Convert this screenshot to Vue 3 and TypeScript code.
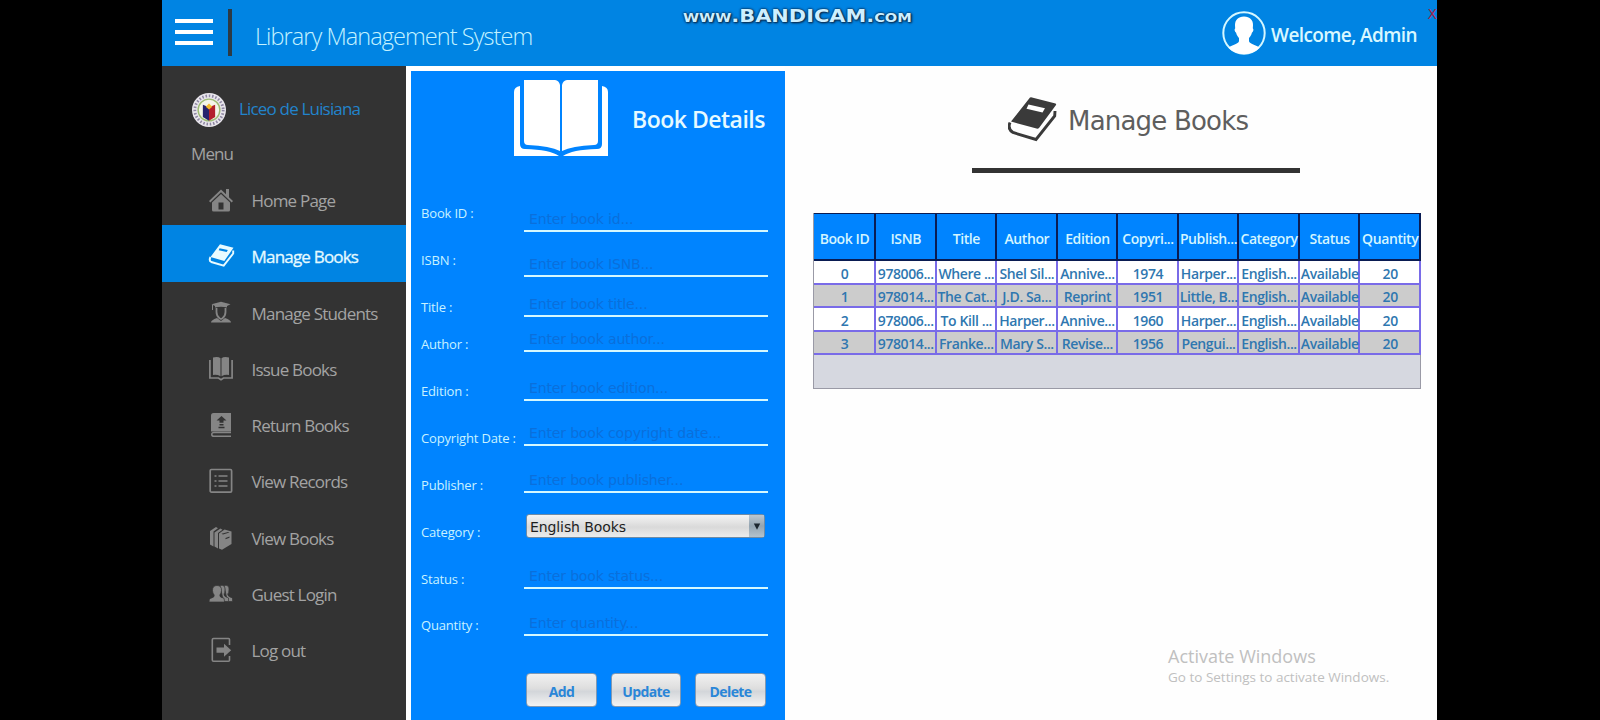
<script setup lang="ts">
import { ref } from 'vue'

interface MenuItem {
  label: string
  icon: string
}
interface Field {
  label: string
  placeholder?: string
}

const menu: MenuItem[] = [
  { label: 'Home Page', icon: 'home' },
  { label: 'Manage Books', icon: 'book' },
  { label: 'Manage Students', icon: 'student' },
  { label: 'Issue Books', icon: 'open' },
  { label: 'Return Books', icon: 'return' },
  { label: 'View Records', icon: 'list' },
  { label: 'View Books', icon: 'books' },
  { label: 'Guest Login', icon: 'group' },
  { label: 'Log out', icon: 'exit' },
]
const active = ref('Manage Books')

const fields: Field[] = [
  { label: 'Book ID :', placeholder: 'Enter book id...' },
  { label: 'ISBN :', placeholder: 'Enter book ISNB...' },
  { label: 'Title :', placeholder: 'Enter book title...' },
  { label: 'Author :', placeholder: 'Enter book author...' },
  { label: 'Edition :', placeholder: 'Enter book edition...' },
  { label: 'Copyright Date :', placeholder: 'Enter book copyright date...' },
  { label: 'Publisher :', placeholder: 'Enter book publisher...' },
  { label: 'Category :' },
  { label: 'Status :', placeholder: 'Enter book status...' },
  { label: 'Quantity :', placeholder: 'Enter quantity...' },
]

const columns: string[] = ['Book ID', 'ISNB', 'Title', 'Author', 'Edition', 'Copyri...', 'Publish...', 'Category', 'Status', 'Quantity']
const rows: string[][] = [
  ['0', '978006...', 'Where ...', 'Shel Sil...', 'Annive...', '1974', 'Harper...', 'English...', 'Available', '20'],
  ['1', '978014...', 'The Cat...', 'J.D. Sa...', 'Reprint', '1951', 'Little, B...', 'English...', 'Available', '20'],
  ['2', '978006...', 'To Kill ...', 'Harper...', 'Annive...', '1960', 'Harper...', 'English...', 'Available', '20'],
  ['3', '978014...', 'Franke...', 'Mary S...', 'Revise...', '1956', 'Pengui...', 'English...', 'Available', '20'],
]
</script>

<template>
  <div class="stage">
    <div class="app">
      <header class="top">
        <div class="burger"><i></i><i></i><i></i></div>
        <div class="divider"></div>
        <div class="title">Library Management System</div>
        <div class="user">
          <svg class="avatar" viewBox="0 0 44 44">
            <circle cx="22" cy="22" r="20.7" fill="none" stroke="#d5f7ff" stroke-width="2" />
            <path d="M22 5.500c6 0 9 3.600 9 8.500 0 1.500-.2 2.500-.2 3.300 1.200.7.500 3.700-.9 4.500-.6 2.400-1.700 4-2.900 5.200v3c0 2.500 6.500 4 10.500 6.500C34.500 40.500 28.500 43 22 43S9.500 40.500 6.500 36.500C10.500 34 17 32.500 17 30v-3c-1.200-1.200-2.300-2.800-2.900-5.200-1.400-.8-2.100-3.800-.9-4.500 0-.8-.2-1.800-.2-3.300 0-4.900 3-8.500 9-8.500z" fill="#fff" />
          </svg>
          <span class="welcome">Welcome, Admin</span>
        </div>
        <div class="close">X</div>
        <div class="wm"><small>www</small>.BANDICAM.<small>com</small></div>
      </header>
      <div class="body">
        <nav class="side">
          <div class="brand">
            <svg viewBox="0 0 36 36">
              <circle cx="18" cy="18" r="18" fill="#e9e6ec" />
              <circle cx="18" cy="18" r="15" fill="none" stroke="#8f88a3" stroke-width="3" stroke-dasharray="1.600 1.900" />
              <circle cx="18" cy="18" r="11.500" fill="#f4f5ea" stroke="#9dbb74" stroke-width="1.500" />
              <path d="M11.500 12.500l6.500 2.500v14.500l-6.500-4z" fill="#27236e" />
              <path d="M24.500 12.500L18 15v14.500l6.500-4z" fill="#b3202c" />
              <path d="M14.500 14.500l3.500-3.500 3.500 3.500-3.500 3z" fill="#f2b92c" />
            </svg>
            <b>Liceo de Luisiana</b>
          </div>
          <div class="menu-title">Menu</div>
          <a v-for="m in menu" :key="m.label" class="item" :class="{ on: m.label === active }" @click="active = m.label">
            <svg viewBox="0 0 24 24" fill="currentColor">
              <g v-if="m.icon === 'home'">
                <path d="M0 13L12 1.500l5 4.800V1h3v8.200L24 13l-1.300 1.400L12 4.200 1.300 14.400z" />
                <path fill-rule="evenodd" d="M12 6l9 8.600V22q0 1.500-1.500 1.500h-15Q3 23.500 3 22v-7.400zM9.500 14.500v7h5v-7z" />
              </g>
              <g v-else-if="m.icon === 'book'">
                <path fill-rule="evenodd" d="M11 .3L24.500 3.700 15.300 17 1.500 13zM10.600 4.200l-.9 2 8 1.900 1.100-2z" />
                <path d="M24.200 6.500v3L14.700 21.600 2.300 18Q-.3 16.800 1.400 13" fill="none" stroke="currentColor" stroke-width="1.900" />
              </g>
              <g v-else-if="m.icon === 'student'">
                <path d="M2.500 3.200L12 .8l9.500 2.400L18 5v1.500q-6-1.500-12 0V5z" />
                <path d="M7.500 7v4q0 4 3 6.300l1.500.7 1.500-.7q3-2.300 3-6.300V7" fill="none" stroke="currentColor" stroke-width="1.800" />
                <path d="M2 21.500q0-2.500 6-4.500l4 3 4-3q6 2 6 4.500z" />
                <path d="M3.500 4v5" stroke="currentColor" />
              </g>
              <g v-else-if="m.icon === 'open'">
                <path d="M4 .5q5-1.200 7.500.7v18Q8 17.300 4 18zM20 .5q-5-1.200-7.500.7v18q3.500-1.900 7.500-1.200z" />
                <path d="M.9 3v18h8.600L12 22.800l2.500-1.800h8.600V3" fill="none" stroke="currentColor" stroke-width="1.700" />
              </g>
              <g v-else-if="m.icon === 'return'">
                <path fill-rule="evenodd" d="M4.500 0H22v18.500H2V2.500Q2 0 4.500 0zM12.500 3L7.500 7.500h3v2.300h4V7.500h3zM10.500 11v1.500h4V11zM9.500 13.700v1.500h6v-1.500z" />
                <path d="M22 19.500H5q-2.200 0-2.200 1.900T5 23.300h17" fill="none" stroke="currentColor" stroke-width="1.500" />
              </g>
              <g v-else-if="m.icon === 'list'">
                <rect x="1.200" y=".5" width="21.400" height="22.600" rx="1.200" fill="none" stroke="currentColor" stroke-width="1.700" />
                <path d="M5.500 7h2M9.500 7h9M5.500 12h2M9.500 12h9M5.500 17h2M9.500 17h9" stroke="currentColor" stroke-width="1.600" />
              </g>
              <g v-else-if="m.icon === 'books'">
                <path d="M1 5l6-4 2 1.200L4.500 5.500v15L1 18.500zM5.500 6.500l6-4 2 1.200L9 7v15.500l-3.500-2z" />
                <path fill-rule="evenodd" d="M10 7.500l5.500-4 7 2v12.500L13 23.700 10 22.500zM12.500 7.700l1.500.8 6.500-2-1.500-.5zM16.500 12v1.300l4-1.500v-1.300z" />
              </g>
              <g v-else-if="m.icon === 'group'" stroke="#333" stroke-width=".7">
                <path d="M15 3.500q5-1 5 3.500t-1.300 5q-.3 2.500 4.800 4v3.500h-5z" />
                <path d="M11 3.500q5-1 5 3.500t-1 5q-.5 2.500 4.500 4v3.500h-5z" />
                <path d="M8 3.500q4.700 0 4.500 5-.2 3-1.700 4.500-.5 2.500 4.200 3.200l.6 3.800H0q0-3 1.300-3.500 4.700-1.200 3.900-3.500Q3.600 11.500 3.500 8.500 3.400 3.500 8 3.500z" />
              </g>
              <g v-else>
                <path d="M20.500 7V1.500q0-1-1-1h-15q-1.200 0-1.200 1.200v20.300q0 1.200 1.200 1.200h15q1 0 1-1V18" fill="none" stroke="currentColor" stroke-width="1.600" />
                <path d="M7.500 9.500H15V5.800l7.200 6.500L15 18.700v-3.900H7.500z" />
              </g>
            </svg>
            <span>{{ m.label }}</span>
          </a>
        </nav>

        <section class="panel">
          <div class="panel-head">
            <svg viewBox="0 0 94 76" fill="#fff">
              <path d="M10 0h31q4 .5 5 5v66Q36 66 14 65q-4 0-4-4zM84 0H53q-4 .5-5 5v66q10-5 32-6 4 0 4-4z" />
              <path d="M6 6v58q0 5 5 5 25 .5 34 7H0V12q0-5 6-6zM88 6v58q0 5-5 5-25 .5-34 7h45V12q0-5-6-6z" />
            </svg>
            <h2>Book Details</h2>
          </div>
          <div class="form">
            <div class="labels"><span v-for="f in fields" :key="f.label">{{ f.label }}</span></div>
            <div class="inputs">
              <template v-for="f in fields" :key="f.label">
                <div v-if="f.placeholder" class="input">{{ f.placeholder }}</div>
                <div v-else class="combo">
                  <span>English Books</span>
                  <i><svg viewBox="0 0 8 8"><path d="M.8 1h6.400L4 7.200z" fill="#1c2730" /></svg></i>
                </div>
              </template>
            </div>
          </div>
          <div class="buttons">
            <button class="btn">Add</button>
            <button class="btn mid">Update</button>
            <button class="btn">Delete</button>
          </div>
        </section>

        <main class="main">
          <h1>
            <svg viewBox="0 0 50 46">
              <path fill-rule="evenodd" d="M22 1.500Q23 1 24 1.400L47.500 7.500Q48.500 8 48 9L31 32q-1 1-2.500.6L3 25.500zM20.500 8.500l-2 4.300 16 3.700 2.500-4.300z" fill="#3a3a3a" />
              <path d="M47 15l-.3 5L28 43.500 5 36.500Q-.8 33 2 26.500" fill="none" stroke="#3a3a3a" stroke-width="2.900" />
            </svg>
            <span>Manage Books</span>
          </h1>
          <div class="rule"></div>
          <div class="tablebox">
            <table>
              <thead><tr><th v-for="c in columns" :key="c">{{ c }}</th></tr></thead>
              <tbody>
                <tr v-for="(r, i) in rows" :key="i"><td v-for="(c, j) in r" :key="j">{{ c }}</td></tr>
              </tbody>
            </table>
          </div>
          <div class="act"><b>Activate Windows</b><span>Go to Settings to activate Windows.</span></div>
        </main>
      </div>
    </div>
  </div>
</template>

<style>
body { background: #000; overflow: hidden; }
</style>

<style scoped>
.stage { width: 1600px; height: 720px; background: #000; display: flex; overflow: hidden; font-family: 'Open Sans', 'Noto Sans', sans-serif; }
.app { margin-left: 162px; width: 1275px; height: 720px; display: flex; flex-direction: column; background: #fff; }
.top { position: relative; height: 66px; flex: none; background: #0084e3; display: flex; }
.burger { margin: 19px 0 0 13px; width: 38px; display: flex; flex-direction: column; gap: 7px; }
.burger i { height: 4px; background: #fff; }
.divider { margin: 9px 0 0 15px; width: 4px; height: 47px; background: #2c3a45; }
.title { margin: 20px 0 0 23px; font-size: 23.500px; line-height: 32px; font-weight: 300; letter-spacing: -0.94px; color: #c4f2ff; white-space: nowrap; }
.user { margin: 11px 20px 0 auto; display: flex; }
.avatar { width: 44px; height: 44px; }
.welcome { margin-left: 5px; font-size: 19px; line-height: 48px; font-weight: 600; letter-spacing: -0.6px; color: #d9f8ff; white-space: nowrap; }
.close { position: absolute; right: 0; top: 4px; font: 14px/20px 'DejaVu Sans', sans-serif; color: #a3244f; }
.wm { position: absolute; left: 521px; top: 5px; font: bold 18px/21px 'DejaVu Sans', sans-serif; color: #cdefff; white-space: nowrap; text-shadow: 0 0 2px #0a2c50, 0 0 2px #0a2c50, 1px 1px 2px #0a2c50; transform: scaleX(1.160); transform-origin: 0 0; }
.wm small { font-size: 12.600px; text-transform: uppercase; }
.body { flex: 1; display: flex; min-height: 0; }
.side { width: 244px; background: #333; flex: none; }
.brand { display: flex; align-items: center; height: 36px; padding: 26px 0 0 30px; }
.brand svg { width: 34px; height: 34px; }
.brand b { margin: -3px 0 0 13px; font-size: 17px; font-weight: 400; letter-spacing: -0.82px; color: #2284cc; white-space: nowrap; }
.menu-title { padding: 12px 0 0 29px; height: 29px; line-height: 27px; font-size: 17px; letter-spacing: -0.9px; color: #a2a2a2; }
.item { height: 56.250px; box-sizing: border-box; display: flex; align-items: center; padding: 6px 0 0 47px; color: #858585; }
.item svg { width: 24px; height: 24px; overflow: visible; }
.item span { margin: 1px 0 0 18.500px; font-size: 17px; letter-spacing: -0.8px; color: #a3a3a3; white-space: nowrap; }
.item.on { background: #0084e3; color: #e9fbff; }
.item.on span { color: #e4faff; -webkit-text-stroke: 0.3px #e4faff; }
.panel { margin: 5px 0 0 5px; width: 374px; background: #0084ff; flex: none; }
.panel-head { display: flex; height: 129px; }
.panel-head svg { margin: 9px 0 0 103px; width: 94px; height: 76px; }
.panel-head h2 { margin: 32px 0 0 24px; font-size: 23px; line-height: 32px; font-weight: 600; letter-spacing: -0.5px; color: #e6faff; white-space: nowrap; }
.form { display: flex; height: 436px; }
.labels { width: 103px; padding-left: 10px; display: grid; grid-template-rows: 23px 47px 47px 37px 47px 47px 47px 47px 47px 46px; align-items: end; }
.labels span { font-size: 13px; line-height: 20px; letter-spacing: -0.17px; color: #c9f2ff; white-space: nowrap; }
.inputs { width: 244px; display: grid; grid-template-rows: 32px 45px 40px 35px 49px 45px 47px 45px 51px 47px; align-items: end; }
.input { border-bottom: 2px solid #d4f8ff; padding-left: 5px; font: 14px/22px 'DejaVu Sans', sans-serif; letter-spacing: -0.15px; color: #0a6fdb; white-space: nowrap; }
.combo { margin: 0 3px 0 2px; height: 24px; box-sizing: border-box; border: 1px solid #6f8ba5; border-radius: 3px; display: flex; background: linear-gradient(#f4f4f4, #d9d9d9 55%, #ececec); }
.combo span { flex: 1; padding-left: 3px; font: 14px/24px 'DejaVu Sans', sans-serif; letter-spacing: -0.1px; color: #1e1e1e; white-space: nowrap; }
.combo i { width: 15px; background: linear-gradient(#bcc7d0, #93a4b1 50%, #b4c2cc); display: flex; align-items: center; justify-content: center; }
.combo svg { width: 8px; height: 9px; }
.buttons { display: flex; gap: 14px; margin: 37px 0 0 115px; }
.btn { width: 71px; height: 34px; padding: 3px 0 0; border: 1px solid #8199b3; border-radius: 4px; background: linear-gradient(#f1f1f1, #dedede 45%, #d3d6da 55%, #f3f3f3); font: bold 14px/29px 'Open Sans', sans-serif; letter-spacing: -0.6px; color: #2a86d8; }
.btn.mid { width: 70px; }
.main { flex: 1; display: flex; flex-direction: column; min-width: 0; background: #fefefe; }
.main h1 { margin: 30px 0 0 223px; height: 48px; display: flex; font: 26px/50px 'DejaVu Sans', sans-serif; letter-spacing: -0.8px; color: #5e5e5e; white-space: nowrap; }
.main h1 svg { width: 50px; height: 46px; }
.main h1 span { margin-left: 10px; }
.rule { width: 328px; height: 5px; margin: 24px 0 0 187px; background: #333; flex: none; }
.tablebox { margin: 40px 0 0 28px; width: 608px; height: 176px; box-sizing: border-box; border: 1px solid #9a9aa6; background: #d6d8e0; flex: none; }
table { width: 607px; margin: -1px 0 0; table-layout: fixed; border-collapse: separate; border-spacing: 0; }
th, td { box-sizing: border-box; padding: 0; text-align: center; white-space: nowrap; font-size: 14px; line-height: 20px; font-weight: 600; letter-spacing: -0.4px; }
th { height: 48px; padding: 4px 0 0 1px; background: #0084ff; color: #d3f5ff; border: solid #0a1c52; border-width: 1px 2px 2px 0; }
th:first-child { width: 62px; }
td { height: 23px; padding: 2px 0 0 1px; line-height: 19px; background: #fff; color: #2f77b0; border: solid #796be8; border-width: 0 2px 2px 0; }
tbody tr:nth-child(odd) td { height: 24px; padding-top: 2px; }
tbody tr:nth-child(even) td { background: #ccc; }
.act { margin: auto 0 34px 383px; display: flex; flex-direction: column; color: #c0c0c0; white-space: nowrap; }
.act b { font-size: 18px; line-height: 24px; font-weight: 400; }
.act span { font-size: 13.500px; line-height: 18px; }
</style>
